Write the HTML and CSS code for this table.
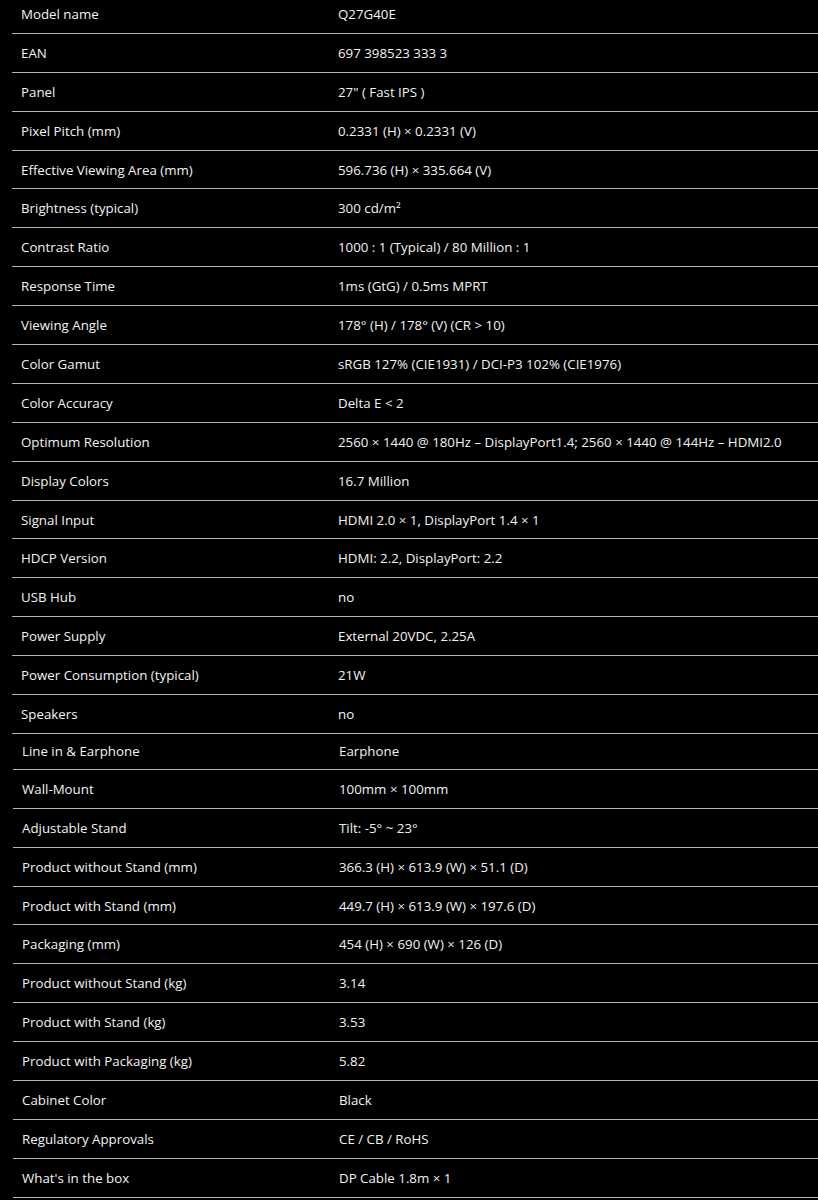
FILE: index.html
```html
<!DOCTYPE html>
<html lang="en">
<head>
<meta charset="utf-8">
<title>Q27G40E Specifications</title>
<link rel="stylesheet" href="styles.css">
</head>
<body>
<div class="specs">
  <div class="spec-table">
    <div class="row"><div class="label">Model name</div><div class="value">Q27G40E</div></div>
    <div class="row"><div class="label">EAN</div><div class="value">697 398523 333 3</div></div>
    <div class="row"><div class="label">Panel</div><div class="value">27" ( Fast IPS )</div></div>
    <div class="row"><div class="label">Pixel Pitch (mm)</div><div class="value">0.2331 (H) × 0.2331 (V)</div></div>
    <div class="row"><div class="label">Effective Viewing Area (mm)</div><div class="value">596.736 (H) × 335.664 (V)</div></div>
    <div class="row"><div class="label">Brightness (typical)</div><div class="value">300 cd/m²</div></div>
    <div class="row"><div class="label">Contrast Ratio</div><div class="value">1000 : 1 (Typical) / 80 Million : 1</div></div>
    <div class="row"><div class="label">Response Time</div><div class="value">1ms (GtG) / 0.5ms MPRT</div></div>
    <div class="row"><div class="label">Viewing Angle</div><div class="value">178° (H) / 178° (V) (CR &gt; 10)</div></div>
    <div class="row"><div class="label">Color Gamut</div><div class="value">sRGB 127% (CIE1931) / DCI-P3 102% (CIE1976)</div></div>
    <div class="row"><div class="label">Color Accuracy</div><div class="value">Delta E &lt; 2</div></div>
    <div class="row"><div class="label">Optimum Resolution</div><div class="value">2560 × 1440 @ 180Hz – DisplayPort1.4; 2560 × 1440 @ 144Hz – HDMI2.0</div></div>
    <div class="row"><div class="label">Display Colors</div><div class="value">16.7 Million</div></div>
    <div class="row"><div class="label">Signal Input</div><div class="value">HDMI 2.0 × 1, DisplayPort 1.4 × 1</div></div>
    <div class="row"><div class="label">HDCP Version</div><div class="value">HDMI: 2.2, DisplayPort: 2.2</div></div>
    <div class="row"><div class="label">USB Hub</div><div class="value">no</div></div>
    <div class="row"><div class="label">Power Supply</div><div class="value">External 20VDC, 2.25A</div></div>
    <div class="row"><div class="label">Power Consumption (typical)</div><div class="value">21W</div></div>
    <div class="row"><div class="label">Speakers</div><div class="value">no</div></div>
  </div>
  <div class="spec-table spec-table-lower">
    <div class="row row-short"><div class="label">Line in &amp; Earphone</div><div class="value">Earphone</div></div>
    <div class="row"><div class="label">Wall-Mount</div><div class="value">100mm × 100mm</div></div>
    <div class="row"><div class="label">Adjustable Stand</div><div class="value">Tilt: -5° ~ 23°</div></div>
    <div class="row"><div class="label">Product without Stand (mm)</div><div class="value">366.3 (H) × 613.9 (W) × 51.1 (D)</div></div>
    <div class="row"><div class="label">Product with Stand (mm)</div><div class="value">449.7 (H) × 613.9 (W) × 197.6 (D)</div></div>
    <div class="row"><div class="label">Packaging (mm)</div><div class="value">454 (H) × 690 (W) × 126 (D)</div></div>
    <div class="row"><div class="label">Product without Stand (kg)</div><div class="value">3.14</div></div>
    <div class="row"><div class="label">Product with Stand (kg)</div><div class="value">3.53</div></div>
    <div class="row"><div class="label">Product with Packaging (kg)</div><div class="value">5.82</div></div>
    <div class="row"><div class="label">Cabinet Color</div><div class="value">Black</div></div>
    <div class="row"><div class="label">Regulatory Approvals</div><div class="value">CE / CB / RoHS</div></div>
    <div class="row"><div class="label">What's in the box</div><div class="value">DP Cable 1.8m × 1</div></div>
  </div>
</div>
</body>
</html>
```

FILE: styles.css
```css
html, body {
  margin: 0;
  padding: 0;
  background: #000;
}

body {
  font-family: "Open Sans", "Noto Sans", "Liberation Sans", sans-serif;
  font-size: 13.3px;
  color: #f2f2f2;
  overflow: hidden;
}

.specs {
  margin-top: -5px;
  padding-left: 12px;
}

.spec-table {
  display: flex;
  flex-direction: column;
}

.spec-table-lower {
  padding-left: 1px;
}

.row {
  display: grid;
  grid-template-columns: 317px 1fr;
  align-items: center;
  height: 37.9px;
  border-bottom: 1px solid #b4b4b4;
  padding-left: 9px;
  box-sizing: content-box;
}

.row-short {
  height: 35px;
}

.label,
.value {
  white-space: nowrap;
  line-height: 20px;
}
```
